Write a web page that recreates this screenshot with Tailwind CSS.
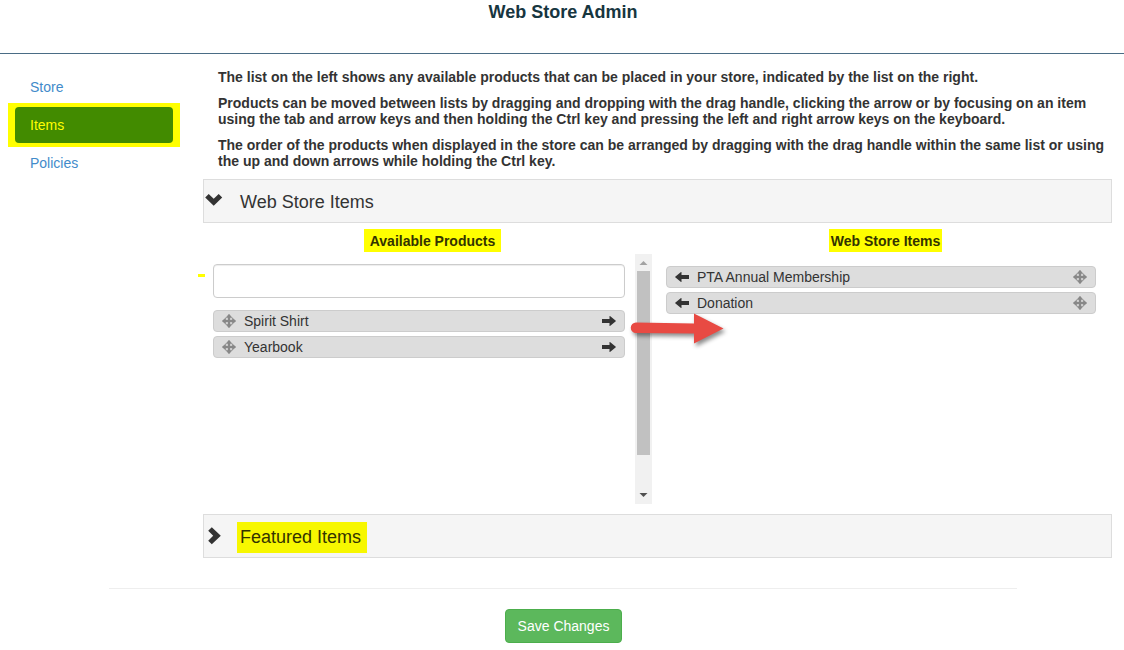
<!DOCTYPE html>
<html lang="en">
<head>
  <meta charset="UTF-8" />
  <meta name="viewport" content="width=device-width, initial-scale=1.0" />
  <title>Web Store Admin</title>
  <script src="https://cdn.jsdelivr.net/npm/@tailwindcss/browser@4"></script>
</head>
<body class="bg-white text-[#333] text-sm leading-5 font-['Liberation_Sans',Arial,sans-serif]">
  <!-- icons shared by the lists -->
  <svg class="hidden">
    <symbol id="move" viewBox="0 0 14 14">
      <path d="M7 0 L10.2 3.8 H8 V6 H10.2 V3.8 L14 7 L10.2 10.2 V8 H8 V10.2 H10.2 L7 14 L3.8 10.2 H6 V8 H3.8 V10.2 L0 7 L3.8 3.8 V6 H6 V3.8 H3.8 Z" fill="currentColor" stroke="currentColor" stroke-width="0.3" />
    </symbol>
    <symbol id="arrow-right" viewBox="0 0 14 14">
      <path d="M0 5 H7.5 V2.2 Q7.6 1.8 8 2.1 L13.8 6.7 Q14 7 13.8 7.3 L8 11.9 Q7.6 12.2 7.5 11.8 V9 H0 Z" fill="currentColor" />
    </symbol>
    <symbol id="arrow-left" viewBox="0 0 14 14">
      <path d="M14 5 H6.5 V2.2 Q6.4 1.8 6 2.1 L0.2 6.7 Q0 7 0.2 7.3 L6 11.9 Q6.4 12.2 6.5 11.8 V9 H14 Z" fill="currentColor" />
    </symbol>
  </svg>

  <header class="h-[54px] border-b border-[#4a6c85]">
    <h1 class="text-center text-lg leading-6 font-bold text-[#17363f] pl-0.5">Web Store Admin</h1>
  </header>

  <div class="flex pt-[15px] pr-3">
    <nav class="w-[203px] shrink-0 pl-2 pr-[23px]">
      <a href="#store" class="block px-[22px] py-2 text-[#428bca]">Store</a>
      <div class="-my-0.5 px-[7px] py-1 bg-[#ffff00]">
        <a href="#items" class="block px-[15px] py-2 rounded bg-[#428b00] text-[#ffff00]">Items</a>
      </div>
      <a href="#policies" class="block px-[22px] py-2 text-[#428bca]">Policies</a>
    </nav>

    <main class="flex-1 min-w-0">
      <div class="pl-[15px] pb-2.5 space-y-2.5 font-bold leading-4">
        <p>The list on the left shows any available products that can be placed in your store, indicated by the list on the right.</p>
        <p>Products can be moved between lists by dragging and dropping with the drag handle, clicking the arrow or by focusing on an item using the tab and arrow keys and then holding the Ctrl key and pressing the left and right arrow keys on the keyboard.</p>
        <p>The order of the products when displayed in the store can be arranged by dragging with the drag handle within the same list or using the up and down arrows while holding the Ctrl key.</p>
      </div>

      <section>
        <button type="button" class="w-full h-11 flex items-center border border-[#ddd] bg-[#f5f5f5] text-lg text-left" aria-expanded="true">
          <svg class="w-5 h-[18px] mb-1" viewBox="0 0 20 18"><path d="M4.7 4 L9.7 8.7 L14.7 4 L18.2 7.5 L9.7 15.7 L1.2 7.5 Z" fill="#333" /></svg>
          <span class="pl-4 pt-0.5">Web Store Items</span>
        </button>

        <div class="grid grid-cols-2 gap-3.5 pl-2.5 pr-[7px]">
          <div>
            <h2 class="h-[31px] pt-1.5 text-center font-bold text-[#333300]"><span class="inline-block pt-0.5 pb-px px-1.5 bg-[#ffff00]">Available Products</span></h2>
            <div class="relative flex h-[250px]">
              <div class="flex-1 pt-2.5 pr-2.5">
                <input type="text" aria-label="Search products" class="block w-full h-[34px] px-3 border border-[#ccc] rounded shadow-[inset_0_1px_1px_rgba(0,0,0,0.075)]" />
                <ul class="mt-3 space-y-1">
                  <li class="flex items-center h-[22px] px-2 border border-[#ccc] rounded bg-[#ddd]">
                    <svg class="size-3.5 text-[#888]"><use href="#move" /></svg>
                    <span class="flex-1 pl-2">Spirit Shirt</span>
                    <button type="button" aria-label="Add Spirit Shirt"><svg class="size-3.5"><use href="#arrow-right" /></svg></button>
                  </li>
                  <li class="flex items-center h-[22px] px-2 border border-[#ccc] rounded bg-[#ddd]">
                    <svg class="size-3.5 text-[#888]"><use href="#move" /></svg>
                    <span class="flex-1 pl-2">Yearbook</span>
                    <button type="button" aria-label="Add Yearbook"><svg class="size-3.5"><use href="#arrow-right" /></svg></button>
                  </li>
                </ul>
              </div>
              <!-- scrollbar -->
              <div class="w-[17px] bg-[#f1f1f1] flex flex-col items-center">
                <svg class="w-[17px] h-[17px]" viewBox="0 0 17 17"><path d="M4.5 11 L8.5 7 L12.5 11 Z" fill="#a3a3a3" /></svg>
                <div class="w-[13px] h-[184px] bg-[#c1c1c1]"></div>
                <svg class="w-[17px] h-[17px] mt-auto" viewBox="0 0 17 17"><path d="M4.5 6 L8.5 10 L12.5 6 Z" fill="#505050" /></svg>
              </div>
              <span class="absolute -left-[15px] top-5 w-[7px] h-[3px] bg-[#ffff00]"></span>
              <!-- drag direction arrow -->
              <svg class="absolute -right-[76px] top-[54px] w-[102px] h-[44px] overflow-visible drop-shadow-[2px_3px_2px_rgba(0,0,0,0.45)]" viewBox="0 0 102 44">
                <path d="M10 14.5 L68 15.5 V5.5 L97.5 20.5 L68 35.5 V25.5 L10 25 A5 5 0 0 1 10 14.5 Z" fill="#e84a43" />
              </svg>
            </div>
          </div>

          <div>
            <h2 class="h-[31px] pt-1.5 text-center font-bold text-[#333300]"><span class="inline-block pt-0.5 pb-px px-0.5 bg-[#ffff00]">Web Store Items</span></h2>
            <ul class="pt-3 pr-[9px] space-y-1">
              <li class="flex items-center h-[22px] px-2 border border-[#ccc] rounded bg-[#ddd]">
                <button type="button" aria-label="Remove PTA Annual Membership"><svg class="size-3.5"><use href="#arrow-left" /></svg></button>
                <span class="flex-1 pl-2">PTA Annual Membership</span>
                <svg class="size-3.5 text-[#888]"><use href="#move" /></svg>
              </li>
              <li class="flex items-center h-[22px] px-2 border border-[#ccc] rounded bg-[#ddd]">
                <button type="button" aria-label="Remove Donation"><svg class="size-3.5"><use href="#arrow-left" /></svg></button>
                <span class="flex-1 pl-2">Donation</span>
                <svg class="size-3.5 text-[#888]"><use href="#move" /></svg>
              </li>
            </ul>
          </div>
        </div>
      </section>

      <section class="mt-2.5">
        <button type="button" class="w-full h-11 flex items-center border border-[#ddd] bg-[#f5f5f5] text-lg text-left" aria-expanded="false">
          <svg class="w-5 h-[18px]" viewBox="0 0 20 18"><path d="M7.8 0.3 L16.8 8.7 L7.8 17.2 L4.2 13.7 L9.2 8.7 L4.2 3.8 Z" fill="#333" /></svg>
          <span class="ml-[13px] mt-0.5 pl-[3px] pr-1.5 leading-[31px] bg-[#f7f700] text-[#333300]">Featured Items</span>
        </button>
      </section>
    </main>
  </div>

  <footer class="mt-[30px]">
    <hr class="ml-[109px] mr-[107px] border-[#eee]" />
    <div class="pt-5 pl-[3px] text-center">
      <button type="button" class="h-[34px] px-3 border border-[#4cae4c] rounded bg-[#5cb85c] text-white">Save Changes</button>
    </div>
  </footer>
</body>
</html>
